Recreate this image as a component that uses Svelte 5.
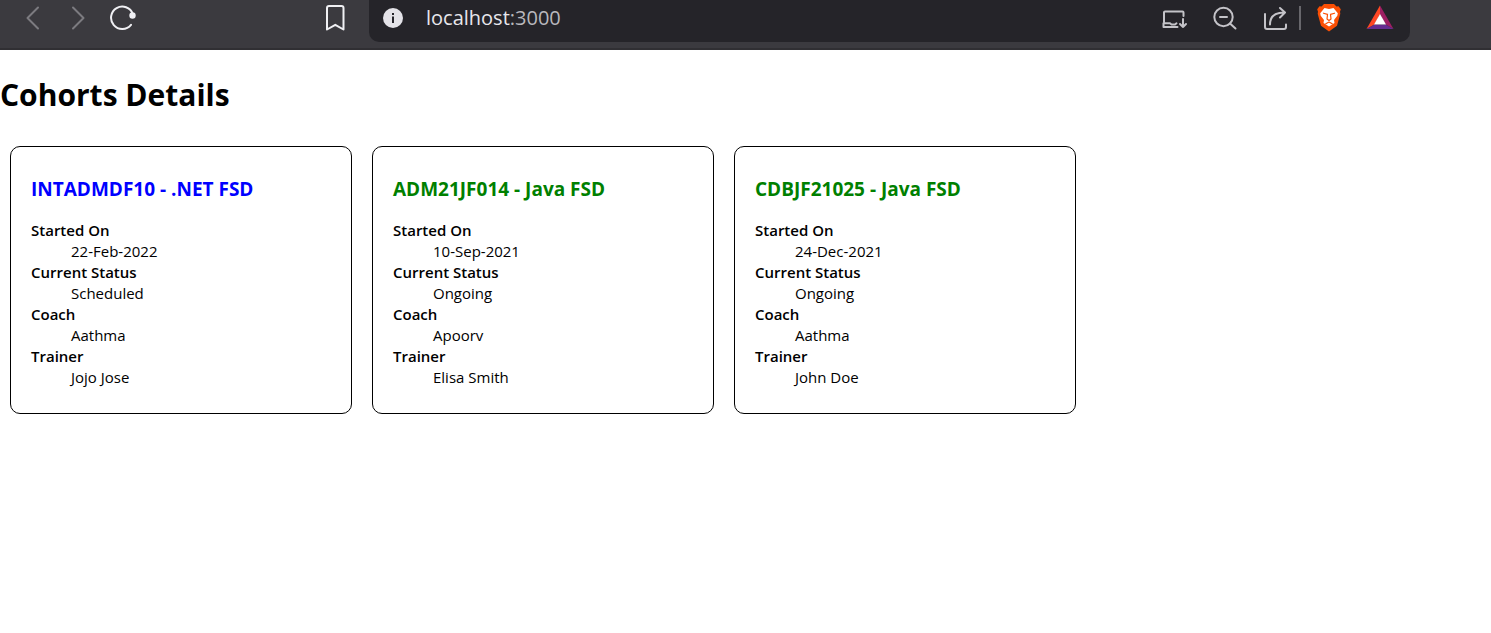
<script>
  const cohorts = [
    { code: 'INTADMDF10', track: '.NET FSD', started: '22-Feb-2022', status: 'Scheduled', coach: 'Aathma', trainer: 'Jojo Jose' },
    { code: 'ADM21JF014', track: 'Java FSD', started: '10-Sep-2021', status: 'Ongoing', coach: 'Apoorv', trainer: 'Elisa Smith' },
    { code: 'CDBJF21025', track: 'Java FSD', started: '24-Dec-2021', status: 'Ongoing', coach: 'Aathma', trainer: 'John Doe' }
  ];
</script>

<header class="toolbar">
  <nav class="nav">
    <button class="dim" aria-label="Back">
      <svg width="28" height="36" viewBox="0 0 28 36"><path d="M18 7.500 7.500 18 18 28.500" /></svg>
    </button>
    <button class="dim" aria-label="Forward">
      <svg width="28" height="36" viewBox="0 0 28 36"><path d="M8 7.500 18.500 18 8 28.500" /></svg>
    </button>
    <button aria-label="Reload">
      <svg width="28" height="36" viewBox="0 0 28 36">
        <path d="M21 24.800A11.200 11.200 0 1 1 22.800 14" />
        <circle class="solid" cx="22.500" cy="15.500" r="3.200" />
      </svg>
    </button>
  </nav>
  <button class="bookmark" aria-label="Bookmark this page">
    <svg width="28" height="36" viewBox="0 0 28 36"><path d="M8 6h12.500a2 2 0 0 1 2 2v21.500l-8.200-4.700-8.300 4.700V8a2 2 0 0 1 2-2z" /></svg>
  </button>
  <div class="address">
    <button class="info" aria-label="View site information">
      <svg width="20" height="36" viewBox="0 0 20 36">
        <circle class="disc" cx="10" cy="18" r="10" />
        <path class="mark" d="M9 13h2v2H9zM9 16.500h2V23H9z" />
      </svg>
    </button>
    <a class="url" href="http://localhost:3000">localhost<span>:3000</span></a>
    <div class="actions">
      <button aria-label="Install app">
        <svg width="28" height="36" viewBox="0 0 28 36">
          <path d="M2 22V12.500a1 1 0 0 1 1-1H20.500a1 1 0 0 1 1 1V16M15.500 27H1.500v-3.700h6.500l1.500 1.200h3.500l1.500-1.200M21 19v8M18 24l3 3 3-3" />
        </svg>
      </button>
      <button aria-label="Zoom out">
        <svg width="28" height="36" viewBox="0 0 28 36">
          <circle cx="10.500" cy="17" r="9.200" /><path d="M7 17h7M17 23.500l5.500 5" />
        </svg>
      </button>
      <button aria-label="Share">
        <svg width="28" height="36" viewBox="0 0 28 36">
          <path d="M1 14v13a2 2 0 0 0 2 2h17a2 2 0 0 0 2-2v-2.500M6 24.500c0-8 5-12 14.500-12M16 8l5 4.500-5 5" />
        </svg>
      </button>
      <i class="divider"></i>
      <button class="brand" aria-label="Brave Shields">
        <svg width="28" height="36" viewBox="0 0 28 36">
          <path fill="#fb4f04" d="M9 4h10l2.500 2.500 2-.2 2.300 3-.8 2.400.3 2-3.300 12L14 31.500l-8-5.800-3.300-12 .3-2-.8-2.400 2.300-3 2 .2z" />
          <path fill="#fff" d="M9.500 8 14 9l4.500-1 4.300 5.300-.5 2.500-3.300 4.200.5 3-5.500 3.500L8.500 23l.5-3-3.300-4.200-.5-2.500z" />
          <path class="face" d="m8.500 13.200 4 1.200M19.500 13.200l-4 1.200M12.500 14.500l-.5 4.500 2 1.500 2-1.500-.5-4.500M10.800 23.800l3.200-1.800 3.200 1.800" />
        </svg>
      </button>
      <button class="brand" aria-label="Brave Rewards">
        <svg width="28" height="36" viewBox="0 0 28 36">
          <path fill="#ff4724" d="M14 5.500v9L8.500 24.500.5 29z" />
          <path fill="#9e1f63" d="m14 5.500 13.500 23.500-8-4.500L14 14.500z" />
          <path fill="#662d91" d="m.5 29 8-4.500h11l8 4.500z" />
          <path fill="#fff" d="m14 14 6 10.500H8z" />
        </svg>
      </button>
    </div>
  </div>
</header>

<main>
  <h1>Cohorts Details</h1>
  <div class="cohorts">
    {#each cohorts as c}
      <section class="card">
        <h3 class:ongoing={c.status === 'Ongoing'}>{c.code} - {c.track}</h3>
        <dl>
          <dt>Started On</dt>
          <dd>{c.started}</dd>
          <dt>Current Status</dt>
          <dd>{c.status}</dd>
          <dt>Coach</dt>
          <dd>{c.coach}</dd>
          <dt>Trainer</dt>
          <dd>{c.trainer}</dd>
        </dl>
      </section>
    {/each}
  </div>
</main>

<style>
  :global(body) {
    margin: 0;
    background: #fff;
    color: #000;
    font-family: 'Segoe UI', 'Open Sans', 'Noto Sans', sans-serif;
  }
  .toolbar {
    display: flex;
    align-items: flex-start;
    box-sizing: border-box;
    height: 50px;
    padding: 0 81px 0 20px;
    background: #3b3a3f;
    border-bottom: 2px solid #302f33;
  }
  button {
    display: block;
    flex: none;
    padding: 0;
    border: 0;
    background: none;
    color: #f0f0f4;
  }
  svg {
    display: block;
    fill: none;
    stroke: currentColor;
    stroke-width: 2;
    stroke-linecap: round;
    stroke-linejoin: round;
  }
  .nav {
    display: flex;
    gap: 17px;
  }
  .dim {
    color: #7c7b80;
  }
  .solid {
    fill: currentColor;
    stroke: none;
  }
  .bookmark {
    margin: 0 20px 0 183px;
  }
  .address {
    display: flex;
    align-items: flex-start;
    flex: 1;
    min-width: 0;
    height: 42px;
    box-sizing: border-box;
    padding: 0 16px 0 14px;
    border-radius: 0 0 10px 10px;
    background: #252429;
  }
  .disc {
    fill: #e4e3e8;
    stroke: none;
  }
  .mark {
    fill: #252429;
    stroke: none;
  }
  .url {
    flex: 1;
    margin-left: 23px;
    font-size: 20px;
    line-height: 36px;
    color: #e8e7ec;
    text-decoration: none;
  }
  .url span {
    color: #b9b8bd;
  }
  .actions {
    display: flex;
    align-items: flex-start;
    gap: 23px;
  }
  .actions button {
    color: #c4c3c8;
  }
  .divider {
    width: 2px;
    height: 24px;
    margin: 6px -9px 0 -16px;
    background: #68676c;
  }
  .brand svg {
    stroke: none;
  }
  .brand .face {
    stroke: #fb4f04;
    stroke-width: 1.2;
  }
  h1 {
    margin: 24px 0 30px;
    font-size: 30px;
    line-height: 42px;
  }
  .cohorts {
    display: flex;
    flex-wrap: wrap;
    gap: 20px;
    padding: 0 10px;
  }
  .card {
    box-sizing: border-box;
    width: 342px;
    padding: 10px 20px 9px;
    border: 1px solid #000;
    border-radius: 10px;
  }
  h3 {
    margin: 20px 0 19px;
    font-size: 19px;
    line-height: 24px;
    color: blue;
  }
  .ongoing {
    color: green;
  }
  dl {
    margin: 16px 0;
    font-size: 15px;
    line-height: 21px;
  }
  dt {
    font-weight: 600;
  }
  dd {
    margin-left: 40px;
  }
</style>
